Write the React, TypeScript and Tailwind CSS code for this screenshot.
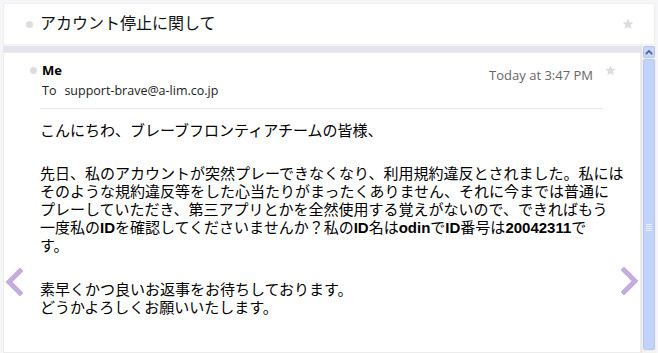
import React from 'react';

const font = { fontFamily: '"Liberation Sans", "Noto Sans CJK JP", sans-serif' };
const uiFont = { fontFamily: '"Open Sans", "Liberation Sans", sans-serif' };

function Star({ className }: { className?: string }) {
  return (
    <svg viewBox="0 0 24 24" className={className} fill="#dcdce2">
      <path d="M12 2.5l2.8 6.3 6.8.6-5.2 4.5 1.6 6.7L12 17l-6 3.6 1.6-6.7L2.4 9.4l6.8-.6z" />
    </svg>
  );
}

function Chevron({ dir }: { dir: 'left' | 'right' }) {
  return (
    <svg viewBox="0 0 18 28" className="w-[18px] h-[28px]" fill="none" stroke="#c4acdc" strokeWidth="5" strokeLinecap="square">
      {dir === 'left' ? <path d="M15 3L4 14l11 11" /> : <path d="M3 3l11 11L3 25" />}
    </svg>
  );
}

function Scrollbar() {
  return (
    <div className="w-[15px] shrink-0 flex flex-col bg-[#f2f2ee] border-l border-[#e6e6e6]">
      <div className="h-[12px] mx-[1px] rounded-[2px] bg-[#c6d6fb] border border-[#b3c6f1] flex items-center justify-center">
        <svg viewBox="0 0 10 6" className="w-[8px] h-[5px]" fill="none" stroke="#4d6185" strokeWidth="2">
          <path d="M1 5l4-4 4 4" />
        </svg>
      </div>
      <div className="flex-1 mx-[1px] mt-[1px] mb-[3px] rounded-[2px] bg-[#c1d2fb] border border-[#b4c7f3] flex items-center justify-center">
        <div className="flex flex-col gap-[1px] mt-[46px]">
          <div className="w-[6px] h-px bg-[#e8eefe]" />
          <div className="w-[6px] h-px bg-[#e8eefe]" />
          <div className="w-[6px] h-px bg-[#e8eefe]" />
          <div className="w-[6px] h-px bg-[#e8eefe]" />
        </div>
      </div>
    </div>
  );
}

export default function App() {
  return (
    <div className="w-[658px] h-[353px] bg-[#f6f6f8] relative overflow-hidden flex flex-col text-black" style={font}>
      {/* Subject */}
      <div className="mx-[3px] mt-[3px] h-[42px] shrink-0 bg-white border border-[#efefef] flex items-center">
        <span className="ml-[22px] w-[7px] h-[7px] rounded-full bg-[#dedede]" />
        <span className="ml-[7px] text-[16px] text-[#111]">アカウント停止に関して</span>
        <Star className="ml-auto mr-[19px] w-[14px] h-[14px]" />
      </div>

      <div className="flex flex-1 min-h-0 mt-[1px]">
        <div className="flex-1 min-w-0 flex flex-col ml-[3px]">
          <div className="h-[6px] bg-[#e6e2ee]" />
          <div className="flex-1 bg-white border border-[#ececec] pl-[36px] pr-[37px]">
            {/* Header */}
            <div className="flex items-start pt-[8px]" style={uiFont}>
              <span className="-ml-[10px] mt-[6px] w-[7px] h-[7px] rounded-full bg-[#dedede]" />
              <div className="ml-[5px] flex flex-col">
                <span className="text-[13px] font-bold leading-[18px]">Me</span>
                <span className="text-[12.5px] leading-[18px] mt-[3px] text-[#222]">
                  To<span className="ml-[8px]">support-brave@a-lim.co.jp</span>
                </span>
              </div>
              <span className="ml-auto mt-[5px] text-[13px] text-[#666]">Today at 3:47 PM</span>
              <Star className="ml-[11px] -mr-[14px] mt-[3px] w-[13px] h-[13px]" />
            </div>
            <div className="h-px bg-[#eaeaea] mt-[8px]" />

            {/* Body */}
            <div className="text-[15px] leading-[18px] pt-[13px]">
              <p className="whitespace-nowrap">こんにちわ、ブレーブフロンティアチームの皆様、</p>
              <p className="whitespace-nowrap mt-[25px]">
                先日、私のアカウントが突然プレーできなくなり、利用規約違反とされました。私には<br />
                そのような規約違反等をした心当たりがまったくありません、それに今までは普通に<br />
                プレーしていただき、第三アプリとかを全然使用する覚えがないので、できればもう<br />
                一度私の<b>ID</b>を確認してくださいませんか？私の<b>ID</b>名は<b>odin</b>で<b>ID</b>番号は<b>20042311</b>で<br />
                す。
              </p>
              <p className="whitespace-nowrap mt-[26px]">
                素早くかつ良いお返事をお待ちしております。<br />
                どうかよろしくお願いいたします。
              </p>
            </div>
          </div>
        </div>
        <Scrollbar />
        <div className="w-[2px] shrink-0" />
      </div>

      <div className="absolute left-[5px] top-[268px]">
        <Chevron dir="left" />
      </div>
      <div className="absolute left-[621px] top-[267px]">
        <Chevron dir="right" />
      </div>
    </div>
  );
}
